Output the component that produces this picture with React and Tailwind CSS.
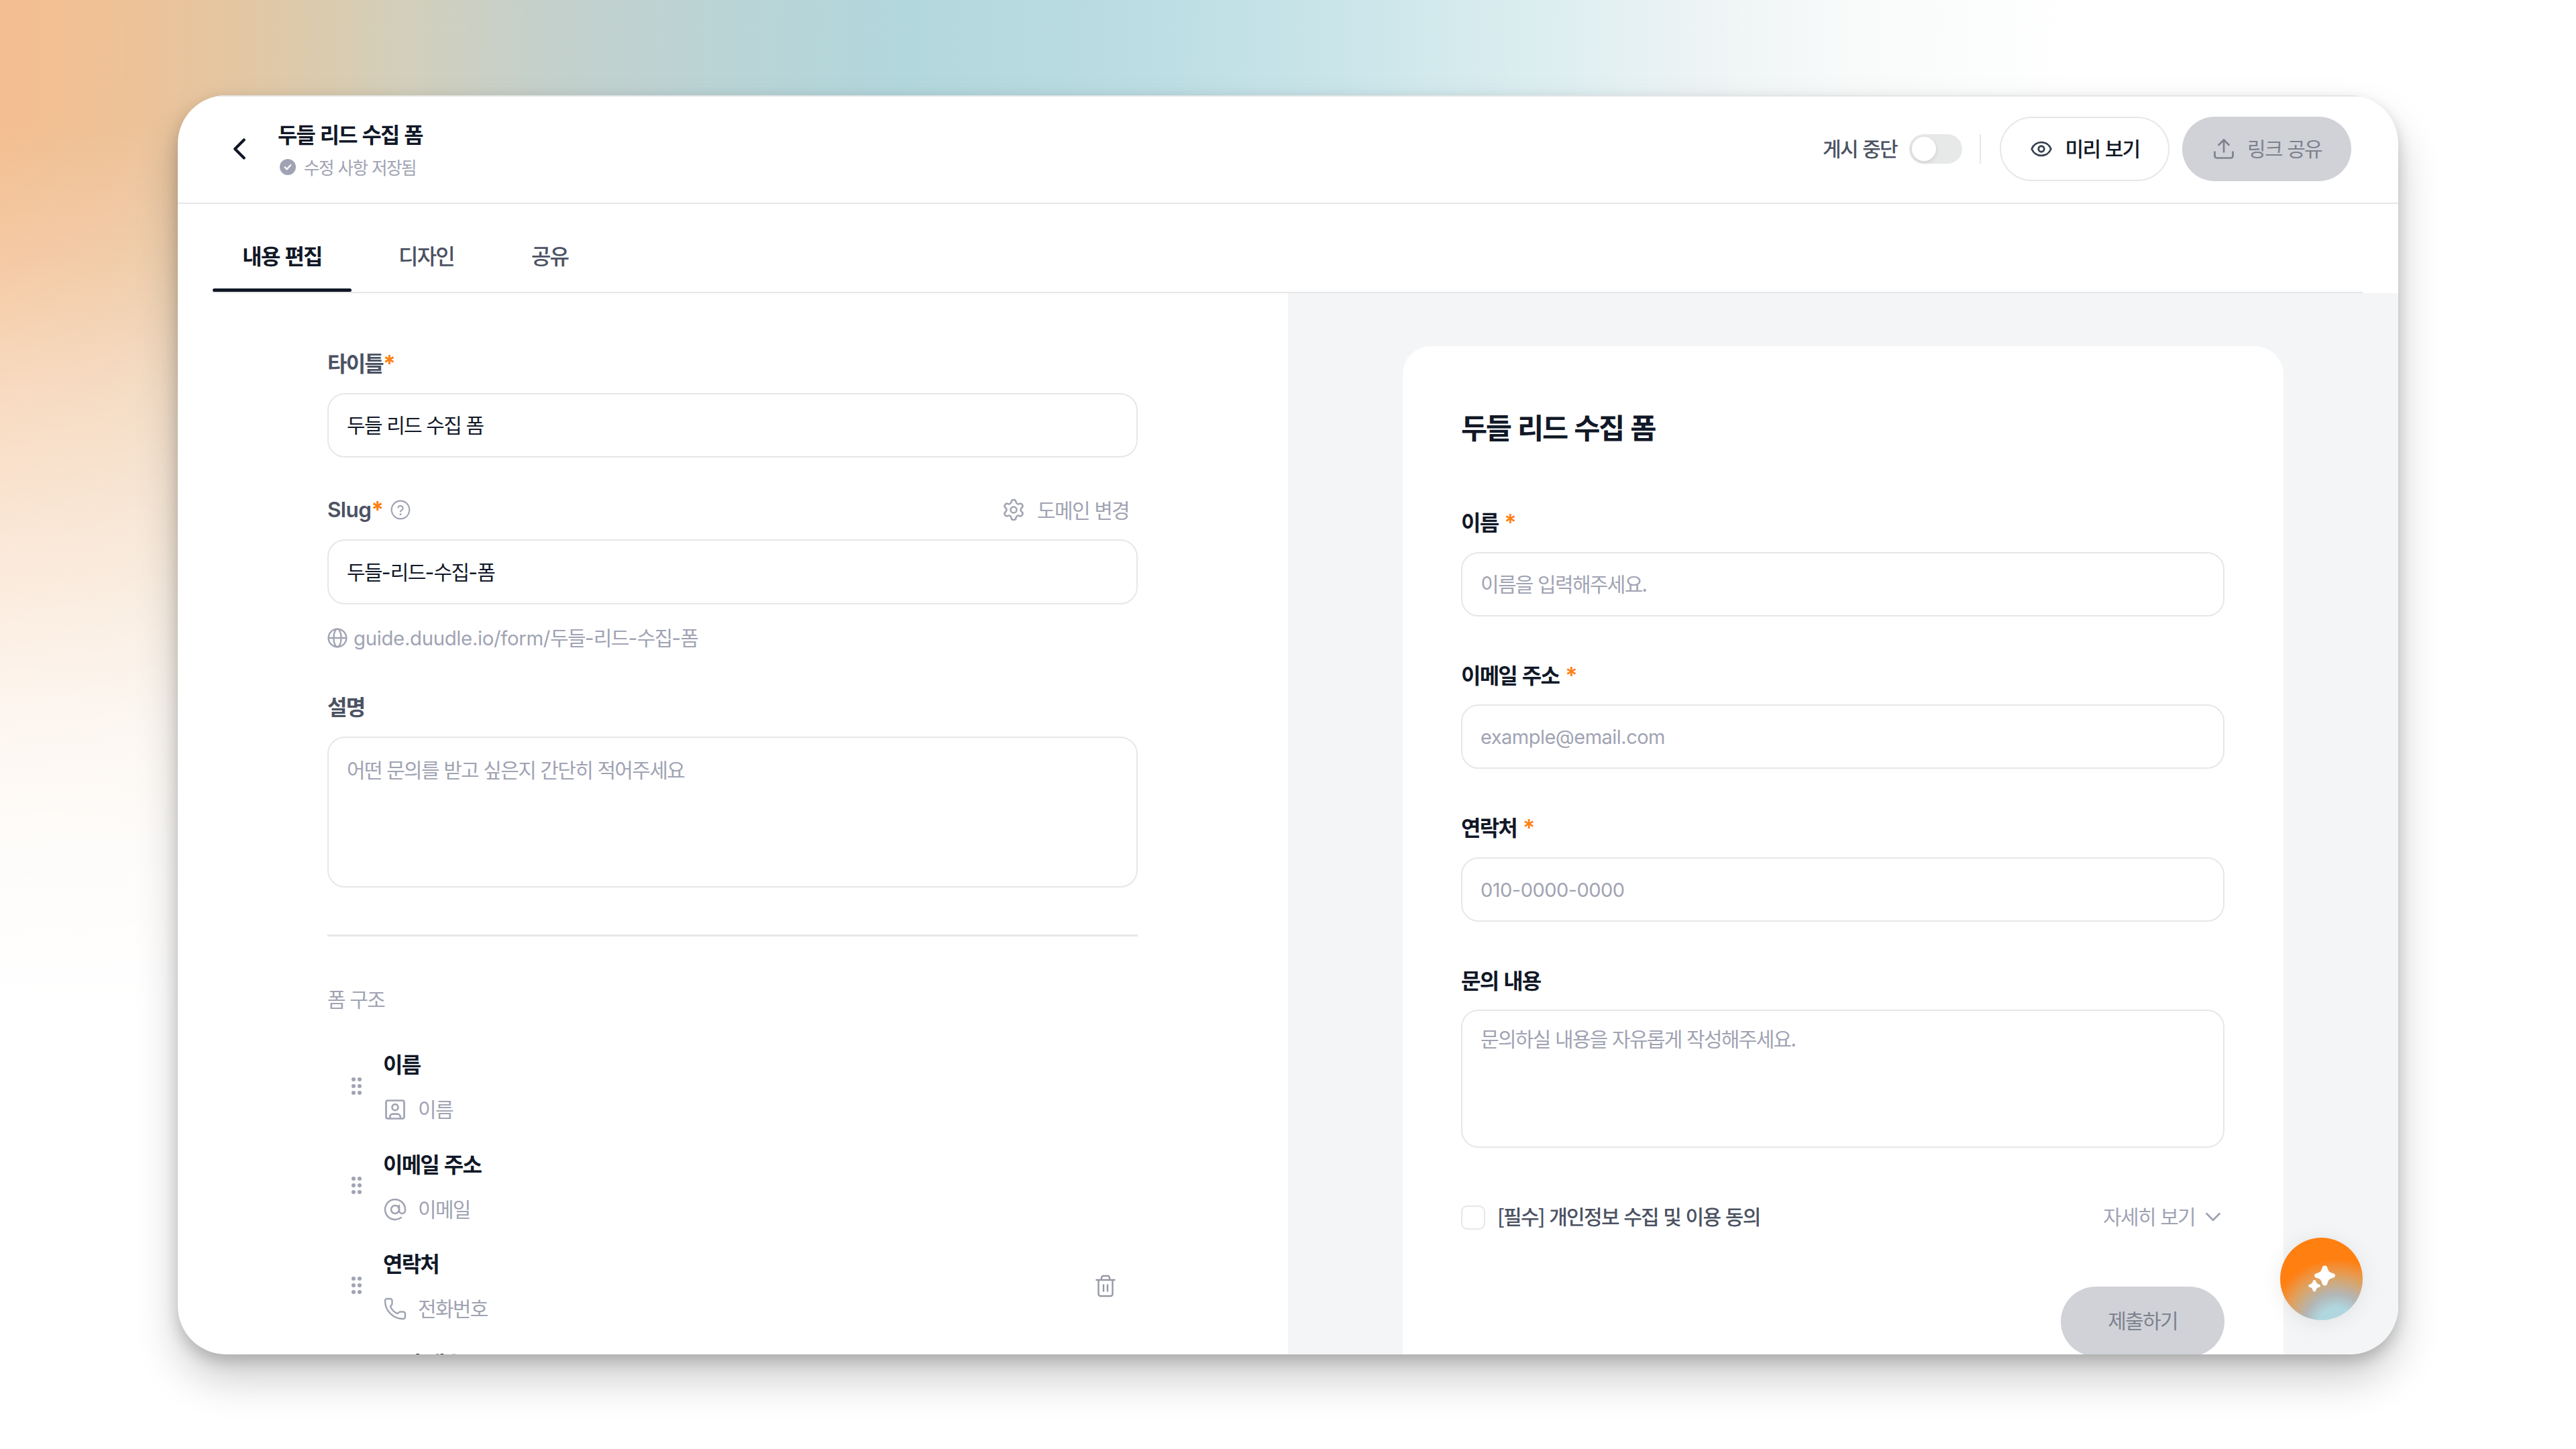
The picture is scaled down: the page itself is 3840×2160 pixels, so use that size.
import React from "react";
import { ChevronLeft, ChevronDown, Eye, Upload, Settings, AtSign, Phone, Trash2 } from "lucide-react";

const KO = "[&_*]:tracking-[-0.056em] [&_*]:[word-spacing:0.075em]";

function Stroke({ className, children, width = 1.6 }) {
  return (
    <svg
      viewBox="0 0 24 24"
      fill="none"
      stroke="currentColor"
      strokeWidth={width}
      strokeLinecap="round"
      strokeLinejoin="round"
      className={className}
    >
      {children}
    </svg>
  );
}

function CheckBadge() {
  return (
    <svg viewBox="0 0 24 24" className="size-6 shrink-0">
      <circle cx="12" cy="12" r="12" fill="#a0a3b3" />
      <path d="M7.8 12.4l2.9 2.8 5.4-6" fill="none" stroke="#fff" strokeWidth="2.4" strokeLinecap="round" strokeLinejoin="round" />
    </svg>
  );
}

function HelpIcon() {
  return (
    <Stroke className="size-[32px] text-[#a0a3b3]">
      <circle cx="12" cy="12" r="10" />
      <path d="M9.3 9.3a2.8 2.8 0 0 1 5.4 1c0 1.9-2.7 2.3-2.7 3.5" />
      <path d="M12 17h.01" strokeWidth="2.2" />
    </Stroke>
  );
}

function GlobeIcon() {
  return (
    <Stroke className="size-[32px] shrink-0" width={1.8}>
      <circle cx="12" cy="12" r="10" />
      <ellipse cx="12" cy="12" rx="4.2" ry="10" />
      <path d="M2.2 12h19.6" />
    </Stroke>
  );
}

function PersonCard() {
  return (
    <Stroke className="size-[36px]" width={1.8}>
      <rect x="3" y="3" width="18" height="18" rx="1.8" />
      <circle cx="12" cy="9.8" r="3" />
      <path d="M6.800 20.600v-1.200a3 3 0 0 1 3-3h4.400a3 3 0 0 1 3 3v1.200" />
    </Stroke>
  );
}

function Grip() {
  return (
    <div className="mb-[3px] grid w-[16px] grid-cols-[6px_6px] gap-x-[3px] gap-y-[4px]">
      {[0, 1, 2, 3, 4, 5].map((i) => (
        <span key={i} className="size-[6px] rounded-full bg-[#a0a3b3]" />
      ))}
    </div>
  );
}

function Required({ spaced }) {
  return (
    <span
      className={
        spaced
          ? "ml-[9px] font-['Inter'] text-[34px] font-semibold tracking-normal! text-[#ff7f11]"
          : "font-['Inter'] text-[34px] font-bold tracking-normal! text-[#ff7f11]"
      }
    >
      *
    </span>
  );
}

function SlugValue() {
  return (
    <>
      두들<span className="font-['Inter'] tracking-[-0.03em]!">-</span>리드
      <span className="font-['Inter'] tracking-[-0.03em]!">-</span>수집
      <span className="font-['Inter'] tracking-[-0.03em]!">-</span>폼
    </>
  );
}

function Header() {
  return (
    <header className="flex h-[162px] shrink-0 items-center border-t-2 border-b-2 border-t-[#e4e5e5] border-b-[#e6e7e8] pr-[70px] pb-[2px] pl-[65px]">
      <ChevronLeft className="size-[54px] text-[#111827]" strokeWidth={1.9} />
      <div className="ml-[30px] flex flex-col">
        <div className="h-[48px] text-[31.8px] leading-[48px] font-semibold">두들 리드 수집 폼</div>
        <div className="mt-[6px] ml-[3px] flex h-[40px] items-center gap-[12px] text-[25.6px] leading-[40px] text-[#a0a3b3]">
          <CheckBadge />
          <span>수정 사항 저장됨</span>
        </div>
      </div>
      <div className="ml-auto flex items-center">
        <span className="pb-[4px] text-[30px] leading-[44px] font-medium text-[#4b5262]">게시 중단</span>
        <span className="ml-[18px] flex h-[44px] w-[79px] items-center rounded-full bg-[#e7e8e8] pl-[4px]">
          <span className="size-[36px] rounded-full bg-white shadow-[0_2px_6px_rgba(0,0,0,0.12)]" />
        </span>
        <span className="ml-[26px] h-[44px] w-[2px] bg-[#e6e7e8]" />
        <button className="ml-[28px] flex h-[96px] w-[253px] items-center justify-center gap-[19px] rounded-full border-2 border-[#e6e7e8] text-[30px] leading-[44px] font-medium">
          <Eye className="size-[34px] text-[#374151]" strokeWidth={2} />
          <span className="pb-[4px]">미리 보기</span>
        </button>
        <button className="ml-[19px] flex h-[96px] w-[252px] items-center justify-center gap-[17px] rounded-full bg-[#d0d2d8] text-[30px] leading-[44px] text-[#7d828e]">
          <Upload className="size-[36px]" strokeWidth={1.8} />
          <span className="pb-[4px]">링크 공유</span>
        </button>
      </div>
    </header>
  );
}

function Tabs() {
  return (
    <nav className="mr-[53px] ml-[52px] flex h-[133px] shrink-0 gap-[25px] border-b-2 border-[#e6e7e8] text-[32px] leading-[40px] font-medium text-[#4b5262]">
      <div className="relative w-[207px] pt-[56px] text-center font-semibold text-[#111827]">
        내용 편집
        <span className="absolute inset-x-0 bottom-0 h-[5px] rounded-full bg-[#111827]" />
      </div>
      <div className="px-[45px] pt-[56px]">디자인</div>
      <div className="px-[45px] pt-[56px]">공유</div>
    </nav>
  );
}

function FormItem({ title, kind, icon, removable }) {
  return (
    <div className="flex h-[112px] shrink-0 items-center pr-[30px] pl-[36px]">
      <Grip />
      <div className="ml-[31px] flex flex-col gap-[24px]">
        <div className="h-[44px] text-[32px] leading-[42px] font-semibold">{title}</div>
        <div className="flex h-[44px] items-center gap-[16px] text-[30px] leading-[44px] text-[#a0a3b3]">
          {icon}
          {kind && <span className="pb-[4px]">{kind}</span>}
        </div>
      </div>
      {removable && <Trash2 className="ml-auto size-[36px] text-[#9699a6]" strokeWidth={1.6} />}
    </div>
  );
}

function Editor() {
  return (
    <section className="flex w-[1655px] shrink-0 flex-col overflow-hidden pt-[83px] pr-[224px] pl-[223px]">
      <label className="h-[44px] shrink-0 text-[32px] leading-[40px] font-semibold text-[#4b5262]">
        타이틀
        <Required />
      </label>
      <div className="mt-[22px] h-[96px] shrink-0 rounded-[26px] border-2 border-[#e6e7e8] px-[27px] text-[30px] leading-[88px]">
        두들 리드 수집 폼
      </div>

      <div className="mt-[56px] flex h-[44px] shrink-0 items-center text-[32px] leading-[44px] font-semibold text-[#4b5262]">
        <span className="font-['Inter'] text-[31.5px] tracking-[-0.02em]!">Slug</span>
        <Required />
        <span className="ml-[9px]">
          <HelpIcon />
        </span>
        <span className="mr-[13px] ml-auto flex items-center gap-[17px] text-[30px] font-normal text-[#a0a3b3]">
          <Settings className="size-[36px]" strokeWidth={1.7} />
          <span className="pb-[3px]">도메인 변경</span>
        </span>
      </div>
      <div className="mt-[22px] h-[97px] shrink-0 rounded-[26px] border-2 border-[#e6e7e8] px-[27px] text-[30px] leading-[91px]">
        <SlugValue />
      </div>
      <div className="mt-[30px] -ml-[1px] flex h-[40px] shrink-0 items-center gap-[8px] text-[30px] leading-[40px] text-[#a0a3b3]">
        <GlobeIcon />
        <span className="pb-[1px]">
          <span className="font-['Inter'] text-[29.4px] tracking-[-0.012em]!">guide.duudle.io/form/</span>
          <SlugValue />
        </span>
      </div>

      <label className="mt-[61px] h-[44px] shrink-0 text-[32px] leading-[40px] font-semibold text-[#4b5262]">설명</label>
      <div className="mt-[22px] h-[225px] shrink-0 rounded-[26px] border-2 border-[#e6e7e8] px-[27px] pt-[24px] text-[30px] leading-[44px] text-[#a0a3b3]">
        어떤 문의를 받고 싶은지 간단히 적어주세요
      </div>

      <div className="mt-[70px] h-[3px] shrink-0 bg-[#e6e7e8]" />
      <div className="mt-[72px] h-[42px] shrink-0 text-[30px] leading-[40px] text-[#a0a3b3]">폼 구조</div>

      <div className="mt-[54px] flex flex-col gap-[36.7px]">
        <FormItem title="이름" kind="이름" icon={<PersonCard />} />
        <FormItem title="이메일 주소" kind="이메일" icon={<AtSign className="size-[36px]" strokeWidth={1.7} />} />
        <FormItem title="연락처" kind="전화번호" icon={<Phone className="size-[36px]" strokeWidth={1.6} />} removable />
        <FormItem title="문의 내용" />
      </div>
    </section>
  );
}

function PreviewField({ label, placeholder, latin }) {
  return (
    <div className="mb-[66px] shrink-0">
      <div className="h-[44px] text-[32px] leading-[40px] font-semibold">
        {label}
        <Required spaced />
      </div>
      <div className="mt-[21.5px] h-[96px] rounded-[26px] border-2 border-[#e6e7e8] px-[27px] text-[30px] leading-[88px] text-[#a0a3b3]">
        {latin ? <span className="font-['Inter'] text-[29px] tracking-[-0.018em]!">{placeholder}</span> : placeholder}
      </div>
    </div>
  );
}

function Preview() {
  return (
    <section className="flex flex-1 justify-center overflow-hidden bg-[#f3f5f6]">
      <div className="mt-[79px] flex h-[1640px] w-[1313px] shrink-0 flex-col rounded-[42px] bg-white pt-[90px] pr-[88px] pl-[87px]">
        <h1 className="h-[60px] shrink-0 text-[42.6px] leading-[60px] font-bold">두들 리드 수집 폼</h1>
        <div className="mt-[91px] flex flex-col">
          <PreviewField label="이름" placeholder="이름을 입력해주세요." />
          <PreviewField label="이메일 주소" placeholder="example@email.com" latin />
          <PreviewField label="연락처" placeholder="010-0000-0000" latin />
        </div>
        <div className="h-[44px] shrink-0 text-[32px] leading-[40px] font-semibold">문의 내용</div>
        <div className="mt-[21px] h-[206px] shrink-0 rounded-[26px] border-2 border-[#e6e7e8] px-[27px] pt-[18px] text-[30px] leading-[44px] text-[#a0a3b3]">
          문의하실 내용을 자유롭게 작성해주세요.
        </div>
        <div className="mt-[82px] flex h-[44px] shrink-0 items-center text-[30px] leading-[44px]">
          <span className="size-[36px] rounded-[9px] border-2 border-[#e6e7e8]" />
          <span className="ml-[18px] pb-[5px] font-medium text-[#4b5262]">[필수] 개인정보 수집 및 이용 동의</span>
          <span className="ml-auto flex items-center gap-[8px] text-[#a0a3b3]">
            <span className="pb-[5px]">자세히 보기</span>
            <ChevronDown className="-mr-[2px] mb-[2px] size-[38px]" strokeWidth={1.8} />
          </span>
        </div>
        <button className="mt-[81px] ml-auto h-[104px] w-[244px] shrink-0 rounded-full bg-[#d0d2d8] pb-[4px] text-[30px] leading-[99px] text-[#7d828e]">
          제출하기
        </button>
      </div>
    </section>
  );
}

function AssistantButton() {
  return (
    <button className="absolute right-[53px] bottom-[51px] size-[123px] rounded-full bg-[radial-gradient(circle_at_84px_132px,#b0d7df_0px,#b0d7df_28px,#b3b6b6_48px,#d9a468_72px,#e89a50_80px,#ff7f11_100px)] shadow-[0_4px_32px_rgba(0,0,0,0.08)]">
      <svg viewBox="0 0 123 123" fill="#fff" className="size-full">
        <path d="M66.5 41.5c2 0 3.400 1.200 4 3.500 1.600 5.400 2.600 6.400 8 8 2.300.6 3.500 2 3.500 3.500s-1.200 2.900-3.500 3.500c-5.400 1.600-6.400 2.600-8 8-.6 2.300-2 3.500-4 3.500s-3.400-1.200-4-3.500c-1.600-5.400-2.600-6.400-8-8-2.300-.6-3.500-2-3.500-3.500s1.200-2.900 3.500-3.500c5.400-1.600 6.400-2.600 8-8 .6-2.300 2-3.500 4-3.500z" />
        <path d="M51 63c1.200 0 2 .8 2.300 2 .9 3 1.700 3.700 4.700 4.700 1.300.3 2 1.100 2 2s-.7 1.700-2 2c-3 .9-3.800 1.700-4.700 4.700-.3 1.300-1.100 2-2.300 2s-2-.7-2.300-2c-.9-3-1.700-3.800-4.700-4.700-1.300-.3-2-1.100-2-2s.7-1.700 2-2c3-1 3.800-1.700 4.700-4.700.3-1.200 1.100-2 2.300-2z" />
      </svg>
    </button>
  );
}

export default function App() {
  return (
    <div className="h-[2160px] w-[3840px] overflow-hidden bg-[linear-gradient(180deg,rgba(255,255,255,0)_180px,rgba(255,255,255,0.18)_385px,rgba(255,255,255,0.43)_580px,rgba(255,255,255,0.68)_850px,rgba(255,255,255,0.86)_1060px,rgba(255,255,255,0.95)_1250px,#fff_1500px),linear-gradient(91deg,#f3be90_0px,#efc196_170px,#e6c6a0_320px,#dccaac_460px,#d3cfbb_600px,#c5d0cb_800px,#bad4d6_1080px,#b2d7dd_1350px,#bbdde3_1700px,#cae5ea_2000px,#dceef0_2300px,#eef4f5_2550px,#f8fafa_2750px,#ffffff_3100px)] pt-[142px] pl-[265px]">
      <div
        className={`relative flex h-[1877px] w-[3310px] flex-col overflow-hidden rounded-[72px] bg-white font-['Noto_Sans_CJK_KR',sans-serif] text-[#111827] shadow-[0_36px_64px_rgba(0,0,0,0.2),0_10px_22px_rgba(0,0,0,0.18)] ${KO}`}
      >
        <Header />
        <Tabs />
        <main className="flex min-h-0 flex-1">
          <Editor />
          <Preview />
        </main>
        <AssistantButton />
      </div>
    </div>
  );
}
